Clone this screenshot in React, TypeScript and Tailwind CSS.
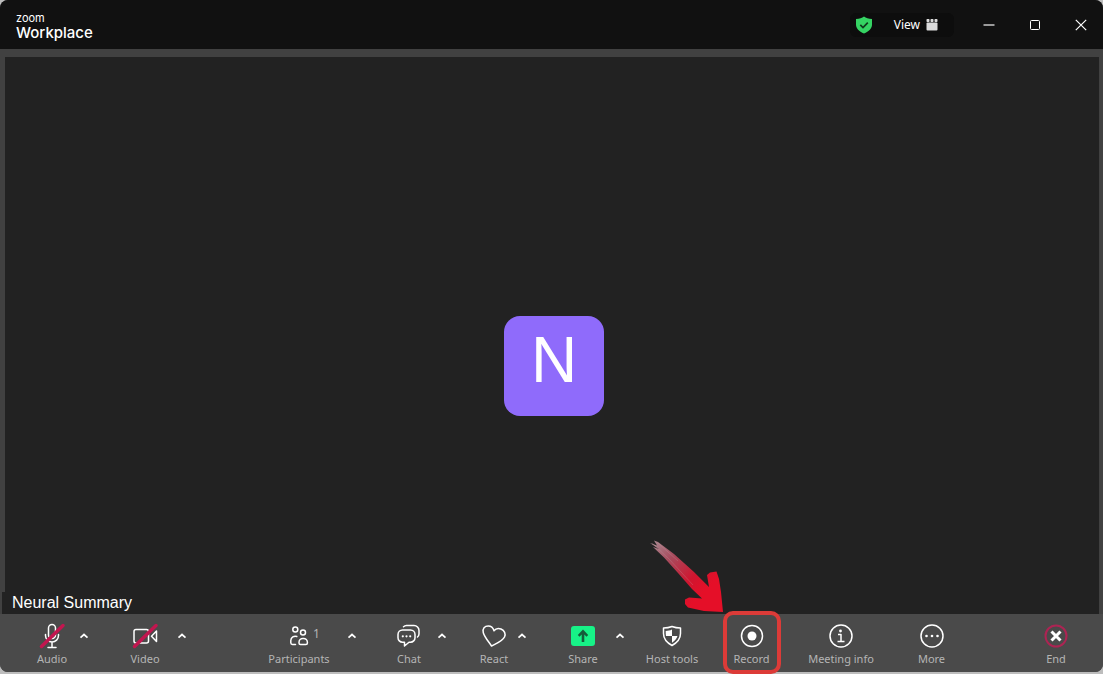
import type { ReactNode } from 'react';
import clsx from 'clsx';

const iconProps = {
  width: 28,
  height: 28,
  viewBox: '0 0 28 28',
  fill: 'none',
  stroke: 'currentColor',
  strokeWidth: 1.5,
  strokeLinecap: 'round' as const,
  strokeLinejoin: 'round' as const,
  'aria-hidden': true,
  className: 'shrink-0',
};

function MicOffIcon() {
  return (
    <svg {...iconProps}>
      <rect x="10.5" y="2.5" width="7" height="14" rx="3.5" />
      <path d="M7.500 12.500v1a6.500 6.500 0 0 0 13 0v-1M14 20.500v5M10 25.500h8" />
      <path d="M3.500 24.500 25 3.500" stroke="#c2164f" strokeWidth="3.500" />
    </svg>
  );
}

function VideoOffIcon() {
  return (
    <svg {...iconProps}>
      <rect x="3" y="7.500" width="14.500" height="13.500" rx="2" />
      <path d="m20.500 14.200 5-5.200v10.500z" />
      <path d="M3.500 24.500 25 3.500" stroke="#c2164f" strokeWidth="3.500" />
    </svg>
  );
}

function ParticipantsIcon() {
  return (
    <svg {...iconProps}>
      <circle cx="10.300" cy="7.500" r="2.500" />
      <circle cx="18" cy="10.500" r="2.500" />
      <path d="M10.500 22.500h-3a1.700 1.700 0 0 1-1.700-1.700v-2.300a4.500 4.500 0 0 1 6-4" />
      <path d="M15.500 22.500a1.500 1.500 0 0 1-1.500-1.500v-.6a3.900 3.900 0 0 1 3.900-3.900h.6a3.900 3.900 0 0 1 3.900 3.900v.6a1.500 1.500 0 0 1-1.500 1.500z" />
    </svg>
  );
}

function ChatIcon() {
  return (
    <svg {...iconProps}>
      <path d="M8.500 4.800A5 5 0 0 1 11.500 3.500H19a5 5 0 0 1 5 5v3.500a4.500 4.500 0 0 1-1.500 3" />
      <path d="M7.500 8h8a4.500 4.500 0 0 1 4.500 4.500v3.200a4.500 4.500 0 0 1-4.500 4.500H14L9.500 24v-3.800h-2A4.500 4.500 0 0 1 3 15.700v-3.200A4.500 4.500 0 0 1 7.500 8z" />
      <g fill="currentColor" stroke="none">
        <circle cx="7.800" cy="14.300" r="1.100" />
        <circle cx="11.500" cy="14.300" r="1.100" />
        <circle cx="15.200" cy="14.300" r="1.100" />
      </g>
    </svg>
  );
}

function HeartIcon() {
  return (
    <svg {...iconProps}>
      <path d="M11.500 24C8.500 19.500 4.500 15 3.300 10.700 2.200 6.500 4.700 4 8.300 4c2.500 0 4.700 1.500 5.700 4.700 1.700-2.200 4.500-2.700 7-1.700 3.500 1.400 5 4.900 3.500 8-2 4.200-8 6.300-13 9z" />
    </svg>
  );
}

function ShareIcon() {
  return (
    <svg {...iconProps} stroke="none">
      <rect x="2" y="4" width="24" height="20" rx="3" fill="#17f287" />
      <path d="M14 7.500 8.800 13l1.700 1.700 2.200-2.200v7.500h2.600v-7.500l2.200 2.200 1.700-1.700z" fill="#155c3a" />
    </svg>
  );
}

function HostToolsIcon() {
  return (
    <svg {...iconProps}>
      <path d="M14 4.500c2.500 1 5.300 1.500 8.500 1.500v5.500c0 5-3 9-8.500 12-5.500-3-8.500-7-8.500-12V6c3.200 0 6-.5 8.500-1.500z" />
      <path d="M14 7.500V14H8c-.3-1.500-.3-3-.3-5 2.300-.2 4.300-.5 6.300-1.500zM14 14h5.500c-.9 2.800-2.700 5-5.500 6.800z" fill="currentColor" stroke="none" />
    </svg>
  );
}

function RecordIcon() {
  return (
    <svg {...iconProps}>
      <circle cx="14" cy="14" r="10.500" />
      <circle cx="14" cy="14" r="4.500" fill="currentColor" stroke="none" />
    </svg>
  );
}

function InfoIcon() {
  return (
    <svg {...iconProps}>
      <circle cx="14" cy="14" r="11" />
      <circle cx="13.500" cy="9" r="1.400" fill="currentColor" stroke="none" />
      <path d="M11 12.500h3v7M10.500 19.500h7" strokeLinecap="butt" />
    </svg>
  );
}

function MoreIcon() {
  return (
    <svg {...iconProps}>
      <circle cx="14" cy="14" r="11" />
      <g fill="currentColor" stroke="none">
        <circle cx="8.500" cy="14" r="1.300" />
        <circle cx="14" cy="14" r="1.300" />
        <circle cx="19.500" cy="14" r="1.300" />
      </g>
    </svg>
  );
}

function EndIcon() {
  return (
    <svg {...iconProps}>
      <circle cx="14" cy="14" r="10.500" stroke="#ad2453" strokeWidth="2" />
      <path d="m9.500 9.500 9 9M18.500 9.500l-9 9" strokeWidth="3" strokeLinecap="butt" />
    </svg>
  );
}

type Tool = {
  label: string;
  icon: ReactNode;
  width: string;
  menu?: boolean;
  count?: number;
  highlighted?: boolean;
};

const mediaTools: Tool[] = [
  { label: 'Audio', icon: <MicOffIcon />, width: 'w-12', menu: true },
  { label: 'Video', icon: <VideoOffIcon />, width: 'w-[58px]', menu: true },
];

const meetingTools: Tool[] = [
  { label: 'Participants', icon: <ParticipantsIcon />, width: 'w-[90px]', menu: true, count: 1 },
  { label: 'Chat', icon: <ChatIcon />, width: 'w-[50px]', menu: true },
  { label: 'React', icon: <HeartIcon />, width: 'w-10', menu: true },
  { label: 'Share', icon: <ShareIcon />, width: 'w-[58px]', menu: true },
  { label: 'Host tools', icon: <HostToolsIcon />, width: 'w-10' },
  { label: 'Record', icon: <RecordIcon />, width: 'w-[71px]', highlighted: true },
  { label: 'Meeting info', icon: <InfoIcon />, width: 'w-[60px]' },
  { label: 'More', icon: <MoreIcon />, width: 'w-[73px]' },
];

const endTools: Tool[] = [{ label: 'End', icon: <EndIcon />, width: 'w-12' }];

function ToolGroup({ tools }: { tools: Tool[] }) {
  return (
    <div className="flex gap-6">
      {tools.map((tool) => (
        <div key={tool.label} className="relative flex">
          <button type="button" className={clsx('flex flex-col items-center text-white', tool.width)}>
            <span className="relative">
              {tool.icon}
              {tool.count && (
                <span className="absolute left-full top-1 text-xs leading-4 text-[#b5b5b5]">{tool.count}</span>
              )}
            </span>
            <span className="whitespace-nowrap text-[11px] leading-[18px] text-[#b5b5b5]">{tool.label}</span>
          </button>
          {tool.menu && (
            <button type="button" aria-label={`${tool.label} options`} className="flex h-7 w-4 items-center justify-center text-white">
              <svg width="10" height="6" viewBox="0 0 10 6" fill="none" stroke="currentColor" strokeWidth="1.700" aria-hidden="true">
                <path d="m1.500 4.700 3.500-3.200 3.500 3.200" />
              </svg>
            </button>
          )}
          {tool.highlighted && (
            <>
              <div className="pointer-events-none absolute -top-[11px] left-1/2 h-[63px] w-[58px] -translate-x-1/2 rounded-[10px] border-4 border-[#dc3b38]" />
              <PointerArrow />
            </>
          )}
        </div>
      ))}
    </div>
  );
}

// Hand-drawn arrow that points at the highlighted tool
function PointerArrow() {
  return (
    <svg className="pointer-events-none absolute bottom-full right-full -mr-2 mb-2 max-w-none" width="80" height="80" viewBox="0 0 80 80" fill="none" aria-hidden="true">
      <defs>
        <linearGradient id="arrow" x1="8" y1="7" x2="60" y2="58" gradientUnits="userSpaceOnUse">
          <stop offset="0" stopColor="#a98a92" />
          <stop offset=".35" stopColor="#a84a5c" />
          <stop offset=".75" stopColor="#d0152f" />
          <stop offset="1" stopColor="#e50f28" />
        </linearGradient>
      </defs>
      <path
        d="M10 6.500 14 8 30 20 50 38 65 53 63 41 66 38.500 72.500 37.500 75 45 77 58 79 78 60 77 44 73.500 41 70 41 65.500 45 63.500 58 64.500 48 55 34 39 20 23.500 9 13l6 2-9-6 7 2.500z"
        fill="url(#arrow)"
      />
      <path d="m8 9 17 16 24 26M14 9l20 18" stroke="#c9a5ab" strokeWidth=".6" strokeOpacity=".4" />
    </svg>
  );
}

function TitleBar() {
  return (
    <header className="flex h-[49px] items-center justify-between rounded-t-lg bg-[#111111] pl-4 text-white">
      <div className="flex flex-col pt-0.5 font-['Inter',sans-serif]">
        <span className="text-[11px] leading-[14px]">zoom</span>
        <span className="text-[15px] font-medium leading-[15px]">Workplace</span>
      </div>
      <div className="flex items-center">
        <div className="flex h-6 items-center rounded-md bg-[#0d0d0d] pl-1 pr-4">
          <button type="button" aria-label="Meeting security" className="mr-5">
            <svg width="20" height="20" viewBox="0 0 20 20" aria-hidden="true">
              <path d="M10 1.500c2 1.400 4.500 2.300 8 2.500v5.500c0 4-3 7-8 9-5-2-8-5-8-9V4c3.500-.2 6-1.100 8-2.500z" fill="#35d363" />
              <path d="m6.300 9.800 2.700 2.700 4.800-4.900" fill="none" stroke="#10391d" strokeWidth="1.700" />
            </svg>
          </button>
          <button type="button" className="flex items-center gap-1.5 text-xs">
            View
            <svg width="12" height="12" viewBox="0 0 12 12" fill="#dcdcdc" aria-hidden="true">
              <rect x=".5" y="0" width="3" height="3" rx=".7" />
              <rect x="4.500" y="0" width="3" height="3" rx=".7" />
              <rect x="8.500" y="0" width="3" height="3" rx=".7" />
              <rect x=".5" y="3.500" width="11" height="8" rx="1" />
            </svg>
          </button>
        </div>
        <div className="-mr-px ml-3 flex">
          <button type="button" aria-label="Minimize" className="flex h-8 w-[46px] items-center justify-center">
            <svg width="12" height="12" viewBox="0 0 12 12" stroke="#c8c8c8" strokeWidth="1.500" aria-hidden="true">
              <path d="M.5 6h11" />
            </svg>
          </button>
          <button type="button" aria-label="Maximize" className="flex h-8 w-[46px] items-center justify-center">
            <svg width="12" height="12" viewBox="0 0 12 12" fill="none" stroke="currentColor" aria-hidden="true">
              <rect x="1.500" y="1.500" width="9" height="9" rx="1" />
            </svg>
          </button>
          <button type="button" aria-label="Close" className="flex h-8 w-[46px] items-center justify-center">
            <svg width="12" height="12" viewBox="0 0 12 12" stroke="currentColor" strokeWidth="1.200" aria-hidden="true">
              <path d="m.8.8 10.400 10.400M11.200.8.8 11.200" />
            </svg>
          </button>
        </div>
      </div>
    </header>
  );
}

export default function App() {
  return (
    <div className="flex min-h-screen flex-col bg-[#bdbdbd] pb-0.5 font-['Noto_Sans',sans-serif]">
      <div className="flex flex-1 flex-col rounded-lg bg-[#414141]">
        <TitleBar />
        <main className="relative ml-[5px] mr-1 mt-2 flex flex-1 items-center justify-center bg-[#222222] pl-1">
          <div className="mt-15 flex size-25 justify-center rounded-2xl bg-[#8f6bfb] font-['Liberation_Sans',sans-serif] text-[64px] leading-[88px] text-white">
            N
          </div>
          <div className="absolute -left-[3px] bottom-0 bg-[#222222] pl-2.5 pr-12 font-['Liberation_Sans',sans-serif] text-base leading-[22px] text-white">
            Neural Summary
          </div>
        </main>
        <nav aria-label="Meeting controls" className="relative flex h-[58px] justify-between rounded-b-lg bg-[#4a4a4a] pl-7 pr-[23px] pt-2">
          <ToolGroup tools={mediaTools} />
          <ToolGroup tools={meetingTools} />
          <ToolGroup tools={endTools} />
        </nav>
      </div>
    </div>
  );
}
